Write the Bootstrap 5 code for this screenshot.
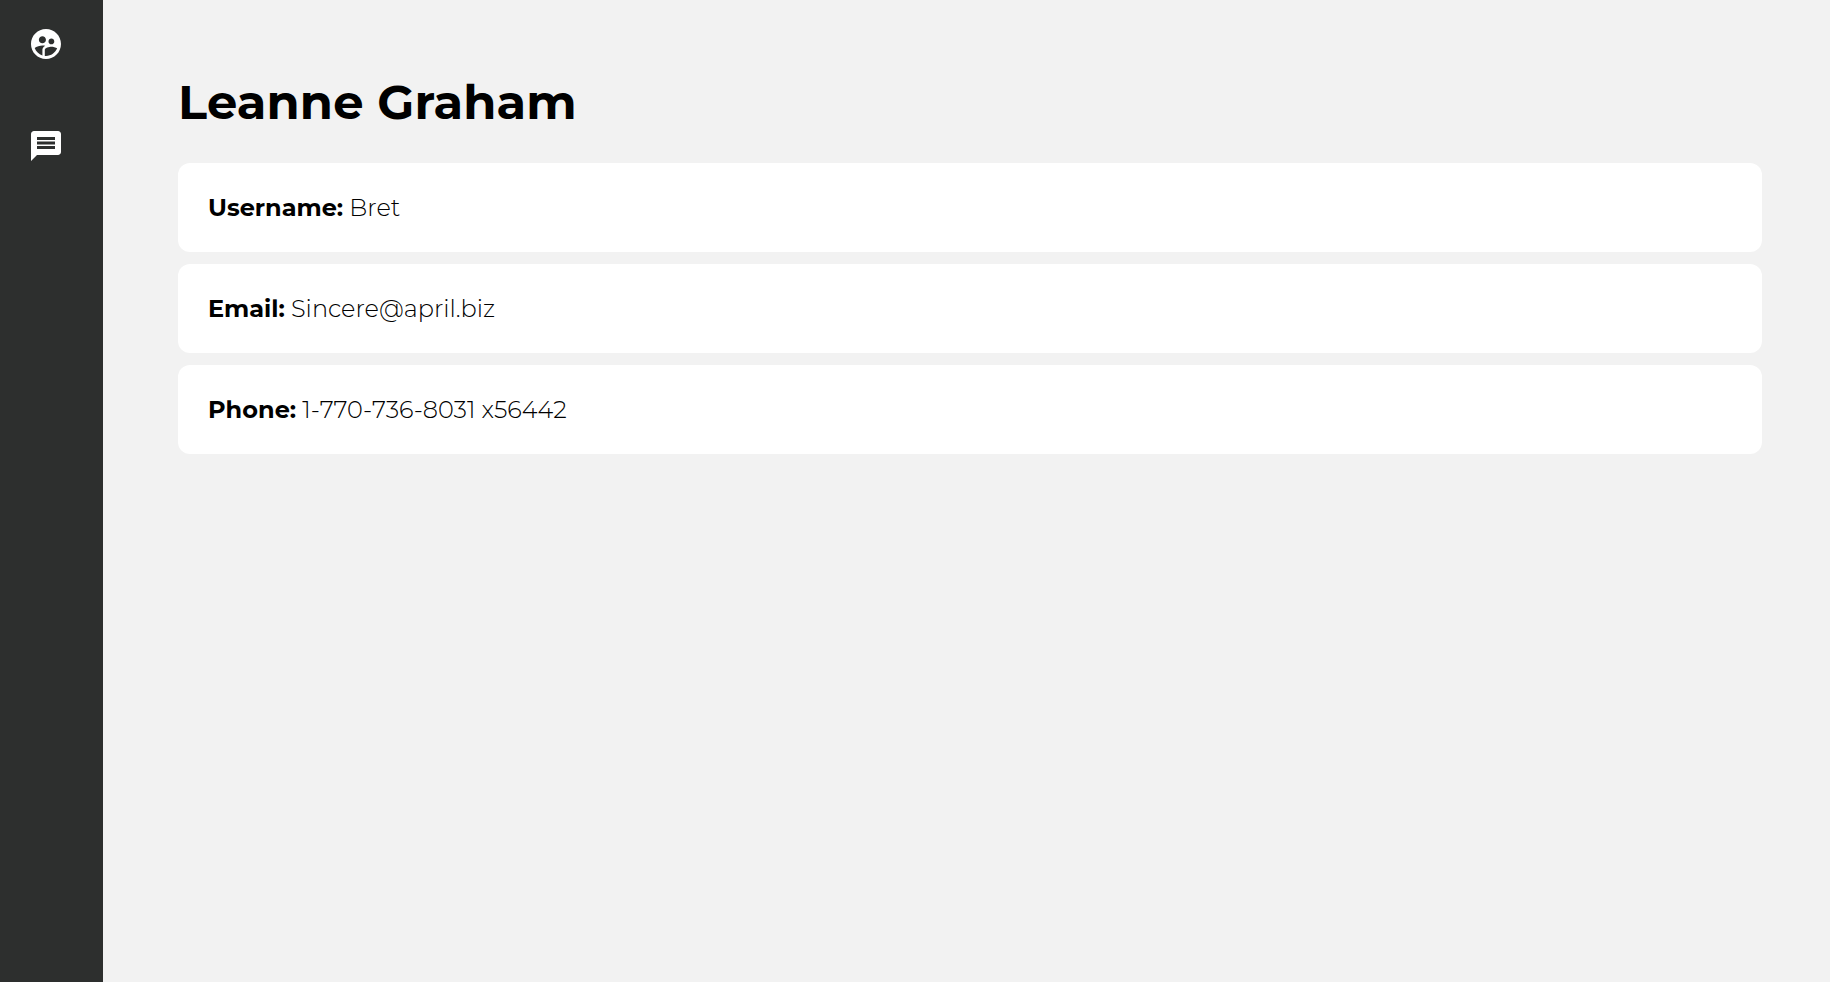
<!DOCTYPE html>
<html lang="en">
<head>
<meta charset="utf-8">
<meta name="viewport" content="width=device-width, initial-scale=1">
<title>Leanne Graham</title>
<link href="https://cdn.jsdelivr.net/npm/bootstrap@5.3.0/dist/css/bootstrap.min.css" rel="stylesheet">
<style>
  body { background: #f2f2f2; color: #000; font-family: Montserrat, Inter, sans-serif; }
  .side-nav { width: 103px; background: #2d2f2e; padding: 26px 0 0 28px; gap: 66px; }
  .side-nav a, .side-nav svg { display: block; width: 36px; height: 36px; }
  .profile { padding: 73px 68px 0 75px; }
  .profile-name { font-size: 48px; line-height: 59px; font-weight: 700; letter-spacing: .13px; margin-bottom: 31px; }
  .info-list { gap: 12px; }
  .info-card { padding: 30px; border-radius: 12px; font-size: 24px; line-height: 29px; font-weight: 300; }
  .info-card strong { font-weight: 700; }
</style>
</head>
<body>
<div class="d-flex min-vh-100">
  <nav class="side-nav d-flex flex-column flex-shrink-0" aria-label="Main">
    <a href="#" class="text-white" aria-label="Users"><svg viewBox="0 0 24 24" fill="currentColor"><path d="M11.99 2c-5.52 0-10 4.48-10 10s4.48 10 10 10 10-4.48 10-10-4.48-10-10-10zm3.61 6.34c1.07 0 1.93.86 1.93 1.93 0 1.07-.86 1.93-1.93 1.93-1.07 0-1.93-.86-1.93-1.93-.01-1.07.86-1.93 1.93-1.93zm-6-1.58c1.3 0 2.36 1.06 2.36 2.36 0 1.3-1.06 2.36-2.36 2.36s-2.36-1.06-2.36-2.36c0-1.31 1.05-2.36 2.36-2.36zm0 9.13v3.75c-2.4-.75-4.3-2.6-5.14-4.96 1.05-1.12 3.67-1.69 5.14-1.69.53 0 1.2.08 1.9.22-1.64.87-1.9 2.02-1.9 2.68zM11.99 20c-.27 0-.53-.01-.79-.04v-4.07c0-1.42 2.94-2.13 4.4-2.13 1.07 0 2.92.39 3.84 1.15-1.17 2.97-4.06 5.09-7.45 5.09z"/></svg></a>
    <a href="#" class="text-white" aria-label="Posts"><svg viewBox="0 0 24 24" fill="currentColor"><path d="M20 2H4c-1.1 0-1.99.9-1.99 2L2 22l4-4h14c1.1 0 2-.9 2-2V4c0-1.1-.9-2-2-2zm-2 12H6v-2h12v2zm0-3H6V9h12v2zm0-3H6V6h12v2z"/></svg></a>
  </nav>
  <main class="profile flex-grow-1">
    <h1 class="profile-name">Leanne Graham</h1>
    <div class="info-list d-flex flex-column">
      <div class="info-card bg-white"><strong>Username:</strong> Bret</div>
      <div class="info-card bg-white"><strong>Email:</strong> Sincere@april.biz</div>
      <div class="info-card bg-white"><strong>Phone:</strong> 1-770-736-8031 x56442</div>
    </div>
  </main>
</div>
<script src="https://cdn.jsdelivr.net/npm/bootstrap@5.3.0/dist/js/bootstrap.bundle.min.js"></script>
</body>
</html>
